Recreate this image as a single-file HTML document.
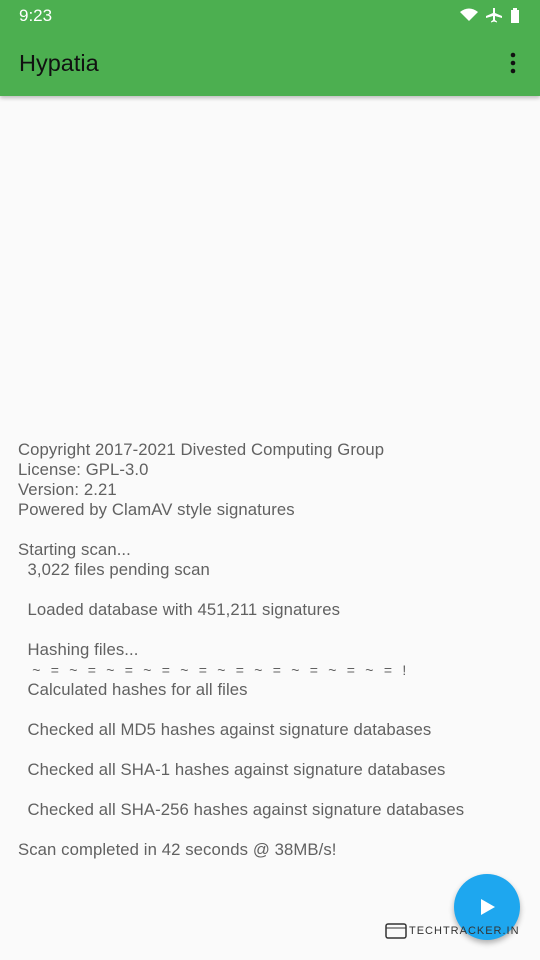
<!DOCTYPE html>
<html><head><meta charset="utf-8"><style>
body{margin:0;width:540px;height:960px;background:#fafafa;font-family:"Liberation Sans",sans-serif;position:relative;overflow:hidden}
.bar{position:absolute;left:0;top:0;width:540px;height:96px;background:#4caf50;box-shadow:0 2px 4px rgba(0,0,0,.25)}
.time{position:absolute;left:19px;top:6px;font-size:17px;color:#fff}
.title{position:absolute;left:19px;top:50px;font-size:23.5px;color:#111}
.txt{position:absolute;left:18px;top:440px;font-size:16.7px;line-height:20px;color:#616161;white-space:pre;letter-spacing:0.1px}
.fab{position:absolute;left:454px;top:874px;width:66px;height:66px;border-radius:50%;background:#1ea7ef;box-shadow:0 3px 6px rgba(0,0,0,.3)}
.wm{position:absolute;top:925px;font-size:11px;color:#333;letter-spacing:1px}
.tl{font-size:14px;letter-spacing:0.85px}
</style></head><body>
<div class="bar">
<div class="time">9:23</div>
<svg style="position:absolute;left:458px;top:6px" width="68" height="18" viewBox="0 0 68 18">
<path d="M2 6 Q11 -1 20 6 L11 15 Z" fill="#fff"/>
<path d="M35 2 L37 2 L37 7 L44 10 L44 12 L37 10 L37 14 L39 15.5 L39 16.5 L36 15.5 L33 16.5 L33 15.5 L35 14 L35 10 L28 12 L28 10 L35 7 Z" fill="#fff"/>
<rect x="53" y="4" width="8" height="13" fill="#fff"/><rect x="55" y="2" width="4" height="2" fill="#fff"/>
</svg>
<div class="title">Hypatia</div>
<svg style="position:absolute;left:509px;top:52px" width="8" height="22"><circle cx="4" cy="3" r="2.3" fill="#111"/><circle cx="4" cy="11" r="2.3" fill="#111"/><circle cx="4" cy="19" r="2.3" fill="#111"/></svg>
</div>
<div class="txt">Copyright 2017-2021 Divested Computing Group
License: GPL-3.0
Version: 2.21
Powered by ClamAV style signatures

Starting scan...
  3,022 files pending scan

  Loaded database with 451,211 signatures

  Hashing files...
<span class="tl">   ~  =  ~  =  ~  =  ~  =  ~  =  ~  =  ~  =  ~  =  ~  =  ~  =  !</span>
  Calculated hashes for all files

  Checked all MD5 hashes against signature databases

  Checked all SHA-1 hashes against signature databases

  Checked all SHA-256 hashes against signature databases

Scan completed in 42 seconds @ 38MB/s!</div>
<div class="fab"><svg width="66" height="66"><path d="M27 25 L41 33 L27 41 Z" fill="#fff"/></svg></div>
<svg style="position:absolute;left:385px;top:923px" width="22" height="16"><rect x="1" y="1" width="20" height="14" rx="2" fill="none" stroke="#333" stroke-width="1.5"/><line x1="1" y1="5" x2="21" y2="5" stroke="#333"/></svg>
<div class="wm" style="left:409px">TECHTRACKER.IN</div>
</body></html>
